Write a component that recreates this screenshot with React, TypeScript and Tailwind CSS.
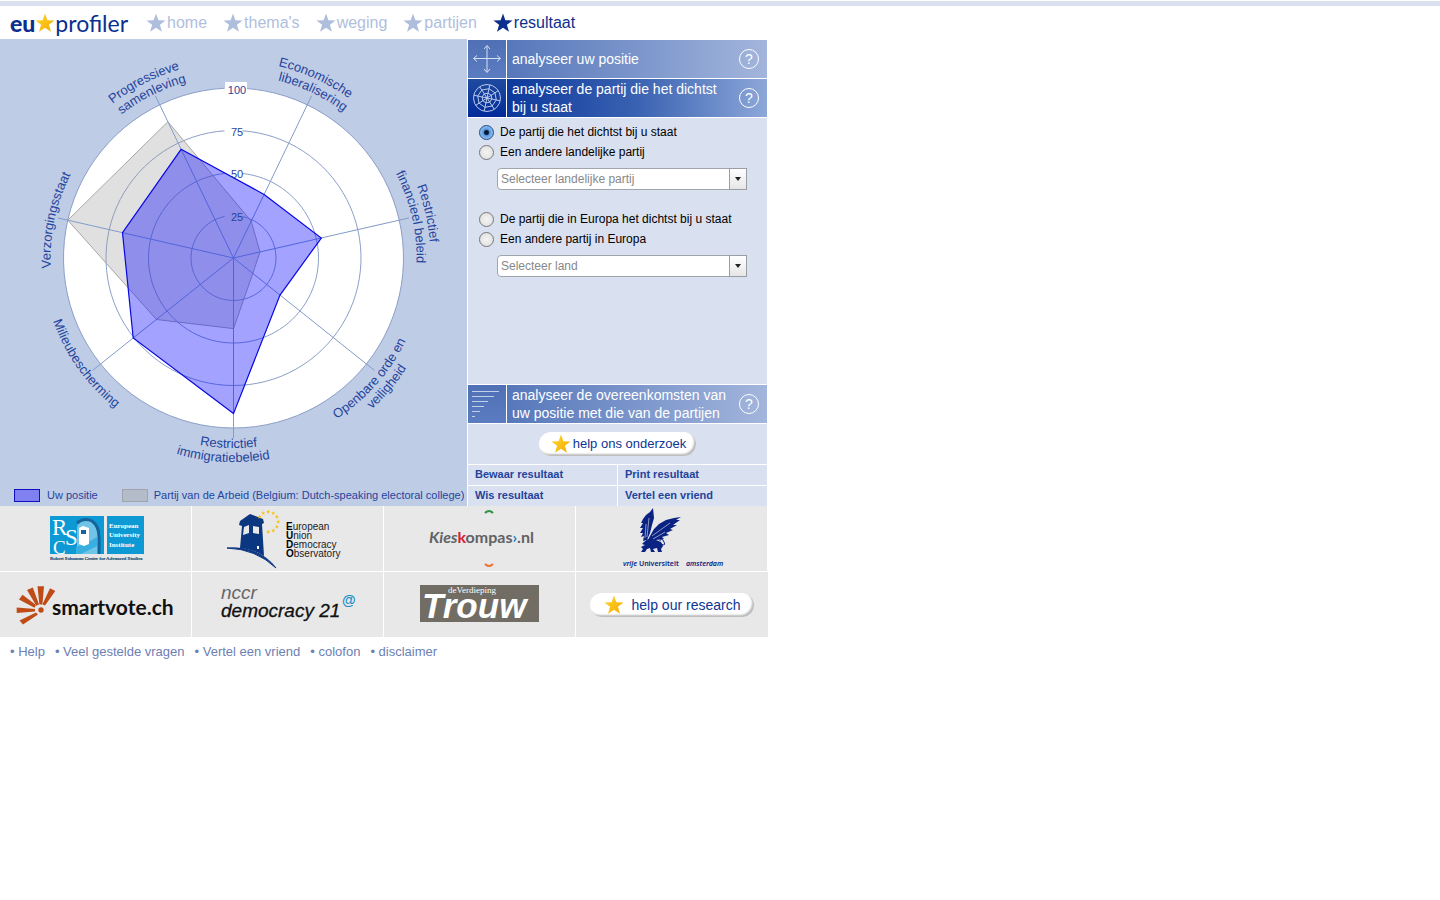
import { useState } from 'react';
import type { ReactNode } from 'react';

const STAR = 'M10 0.5 L12.4 7.2 L19.6 7.4 L13.9 11.8 L16 18.8 L10 14.7 L4 18.8 L6.1 11.8 L0.4 7.4 L7.6 7.2 Z';

const Star = ({ className }: { className: string }) => (
  <svg viewBox="0 0 20 20" className={className} aria-hidden="true">
    <path d={STAR} fill="currentColor" />
  </svg>
);

const GoldStar = ({ className }: { className: string }) => (
  <svg viewBox="0 0 20 20" className={className} aria-hidden="true">
    <defs>
      <linearGradient id="gold" x1="0" y1="0" x2="1" y2="1">
        <stop offset="0" stopColor="#ffd92e" />
        <stop offset="1" stopColor="#f5a800" />
      </linearGradient>
    </defs>
    <path d={STAR} fill="url(#gold)" />
  </svg>
);

const navItems = ['home', "thema's", 'weging', 'partijen', 'resultaat'];
const footerLinks = ['Help', 'Veel gestelde vragen', 'Vertel een vriend', 'colofon', 'disclaimer'];
const actions = ['Bewaar resultaat', 'Print resultaat', 'Wis resultaat', 'Vertel een vriend'];

// Radar geometry
const CX = 233.5;
const CY = 219;
const R = 170;
const axisAngles = [0, 1, 2, 3, 4, 5, 6].map((i) => ((i + 0.5) * 360) / 7);

const at = (deg: number, r: number): [number, number] => {
  const a = (deg * Math.PI) / 180;
  return [CX + r * Math.sin(a), CY - r * Math.cos(a)];
};

const polygon = (values: number[]) =>
  values.map((v, i) => at(axisAngles[i], (v * R) / 100).map((n) => n.toFixed(1)).join(',')).join(' ');

const arc = (from: number, to: number, r: number) => {
  const [x1, y1] = at(from, r);
  const [x2, y2] = at(to, r);
  const large = Math.abs(to - from) > 180 ? 1 : 0;
  return `M${x1} ${y1} A${r} ${r} 0 ${large} ${to > from ? 1 : 0} ${x2} ${y2}`;
};

const yourValues = [41.5, 53, 35, 91.5, 75.5, 67, 71];
const partyValues = [24, 16, 14.5, 41.5, 58, 100, 89];

const axisLabels = [
  { text: 'Economische', angle: 24.5, r: 197 },
  { text: 'liberalisering', angle: 25.5, r: 183 },
  { text: 'Restrictief', angle: 77, r: 197 },
  { text: 'financieel beleid', angle: 77, r: 183 },
  { text: 'Openbare orde en', angle: 131.5, r: 191, flip: true },
  { text: 'veiligheid', angle: 130, r: 205, flip: true },
  { text: 'Restrictief', angle: 181.5, r: 190, flip: true },
  { text: 'immigratiebeleid', angle: 183, r: 204, flip: true },
  { text: 'Milieubescherming', angle: 234.5, r: 191, flip: true },
  { text: 'Verzorgingsstaat', angle: 282, r: 183 },
  { text: 'samenleving', angle: 333.5, r: 182 },
  { text: 'Progressieve', angle: 333, r: 196 },
];

const RadarChart = () => (
  <svg viewBox="0 0 467 447" className="block w-full" role="img" aria-label="Radar" fontFamily='"Liberation Sans", Arial, sans-serif' fill="#1f449c">
    <circle cx={CX} cy={CY} r={R} fill="#fff" />
    {[25, 50, 75, 100].map((tick) => {
      const r = (tick * R) / 100;
      const gap = (Math.asin(9 / r) * 180) / Math.PI;
      return <path key={tick} d={arc(gap, 360 - gap, r)} fill="none" stroke="#8c9fc9" />;
    })}
    <polygon points={polygon(partyValues)} fill="#999" fillOpacity="0.3" stroke="#a8a8a8" />
    {axisAngles.map((angle) => {
      const [x, y] = at(angle, 180);
      return <line key={angle} x1={CX} y1={CY} x2={x} y2={y} stroke="#839bc9" />;
    })}
    <rect x="225" y="43" width="22" height="16" fill="#fff" />
    <polygon points={polygon(yourValues)} fill="#0000ff" fillOpacity="0.36" stroke="#0808e0" strokeWidth="1.2" />
    <g fontSize="11" textAnchor="middle">
      <text x="237" y="55">100</text>
      <text x="237" y="97">75</text>
      <text x="237" y="139">50</text>
      <text x="237" y="182">25</text>
    </g>
    {axisLabels.map((label, i) => (
      <g key={i}>
        <path
          id={`axis-label-${i}`}
          fill="none"
          d={label.flip ? arc(label.angle + 40, label.angle - 40, label.r) : arc(label.angle - 40, label.angle + 40, label.r)}
        />
        <text fontSize="13" textAnchor="middle">
          <textPath href={`#axis-label-${i}`} startOffset="50%">{label.text}</textPath>
        </text>
      </g>
    ))}
  </svg>
);

const CrossIcon = () => (
  <svg viewBox="0 0 38 38" className="size-full" fill="none" stroke="#d5dff2" aria-hidden="true">
    <path d="M19 6V32M6 18.5H32M16 9L19 5.5L22 9M16 29L19 32.5L22 29M9 15.5L5.5 18.5L9 21.5M29 15.5L32.5 18.5L29 21.5" />
  </svg>
);

const WebIcon = () => {
  const spokes = [0, 45, 90, 135, 180, 225, 270, 315].map((d) => {
    const a = ((d + 12) * Math.PI) / 180;
    return [Math.sin(a), -Math.cos(a)];
  });
  return (
    <svg viewBox="0 0 38 38" className="size-full" fill="none" stroke="#b9c9ea" aria-hidden="true">
      <circle cx="19" cy="19" r="13.5" />
      {[5, 9.5].map((r) => (
        <polygon key={r} points={spokes.map(([x, y]) => `${19 + x * r},${19 + y * r}`).join(' ')} />
      ))}
      {spokes.map(([x, y], i) => (
        <line key={i} x1="19" y1="19" x2={19 + x * 13.5} y2={19 + y * 13.5} />
      ))}
    </svg>
  );
};

const BarsIcon = () => (
  <svg viewBox="0 0 38 38" className="size-full" fill="none" stroke="#c3d0ec" aria-hidden="true">
    <path d="M4 6.5H31M4 11.5H26M4 16.5H20M4 21.5H16M4 26.5H12M4 31.5H7" />
  </svg>
);

const SectionBar = ({ icon, active, children }: { icon: ReactNode; active?: boolean; children: ReactNode }) => (
  <div className="flex min-h-[38px] gap-px bg-white">
    <div className={`w-[38px] shrink-0 ${active ? 'bg-linear-to-b from-[#1f4a9f] to-[#03299a]' : 'bg-linear-to-b from-[#4f70b4] to-[#5b7cc0]'}`}>{icon}</div>
    <div className={`flex flex-1 items-center bg-linear-to-r pr-2 pl-[5px] ${active ? 'from-[#0c389c] via-[#3a62b2] to-[#8da7d8]' : 'from-[#5677ba] to-[#a3b5dc]'}`}>
      <button type="button" className="flex-1 pr-2 text-left text-sm leading-[18px] text-white">{children}</button>
      <button type="button" className="flex size-5 shrink-0 items-center justify-center rounded-full border border-white text-sm leading-none text-white">?</button>
    </div>
  </div>
);

const Choice = ({ value, selected, onSelect, children }: { value: string; selected: string; onSelect: (v: string) => void; children: ReactNode }) => (
  <label className="flex h-5 items-center gap-1.5 text-xs text-black">
    <input
      type="radio"
      name="party"
      checked={selected === value}
      onChange={() => onSelect(value)}
      className="size-[15px] appearance-none rounded-full border border-[#777] bg-radial from-[#f4f4f4] to-[#dcdcdc] checked:border-[#234a80] checked:bg-radial checked:from-[#06182f] checked:from-20% checked:via-[#5b9be4] checked:via-35% checked:to-[#b5dcfa]"
    />
    {children}
  </label>
);

const Dropdown = ({ label }: { label: string }) => (
  <div className="relative mt-1.5 mr-5 ml-[18px]">
    <select aria-label={label} className="block h-[22px] w-full appearance-none rounded-l-sm border border-[#a0a5ad] bg-white pr-5 pl-[3px] text-xs text-[#888]">
      <option>{label}</option>
    </select>
    <span className="pointer-events-none absolute inset-y-0 right-0 flex w-[18px] items-center justify-center border border-[#9a9da3] bg-linear-to-b from-white to-[#e6e6e6]">
      <svg viewBox="0 0 6 4" className="h-1 w-1.5" aria-hidden="true"><path d="M0 0H6L3 4Z" fill="#222" /></svg>
    </span>
  </div>
);

const HelpButton = ({ className, children }: { className: string; children: ReactNode }) => (
  <button type="button" className={`flex h-6 items-center rounded-full bg-white text-[#0d3594] shadow-[inset_-2px_-2px_2px_#bbb] ${className}`}>
    <GoldStar className="h-5 w-5" />
    {children}
  </button>
);

const Logo = ({ label, children }: { label: string; children: ReactNode }) => (
  <a href="#" aria-label={label} className="flex h-[66px] items-center justify-center border-r border-b border-white bg-[#e8e8e8]">
    <svg viewBox="0 0 191 65" className="h-full w-full">{children}</svg>
  </a>
);

const SchumanLogo = () => (
  <Logo label="Robert Schuman Centre">
    <rect x="50" y="10" width="54" height="38" fill="#0d99d4" />
    <rect x="107" y="10" width="37" height="38" fill="#0d99d4" />
    <path d="M77 48V22Q78 13 87 14Q99 16 99 30V48Z" fill="#6fc4e8" />
    <path d="M77 17Q84 11 92 15Q99 20 99 31V48" fill="none" stroke="#17639c" strokeWidth="3" />
    <path d="M76 41L87 37L97 31V40L81 48H76Z" fill="#39afe0" />
    <path d="M79 22L83 20L89 22V38L84 40L79 38Z" fill="#fff" />
    <path d="M81 24H86V28H81Z" fill="#17639c" />
    <g fill="#fff" fontFamily='"Liberation Serif", serif'>
      <text x="52" y="29" fontSize="23">R</text>
      <text x="65" y="39" fontSize="23">S</text>
      <text x="53" y="48" fontSize="19">C</text>
      <g fontSize="7" fontWeight="bold">
        <text x="109" y="22">European</text>
        <text x="109" y="31">University</text>
        <text x="109" y="41">Institute</text>
      </g>
    </g>
    <text x="50" y="54" fontSize="5" fill="#0c3f6b" stroke="#0c3f6b" strokeWidth="0.2" fontFamily='"Liberation Serif", serif'>Robert Schuman Centre for Advanced Studies</text>
  </Logo>
);

const EudoLogo = () => (
  <Logo label="European Union Democracy Observatory">
    <path d="M48 15L58 8L71 13L72 17L70 18L72 50Q61 43 48 42L50 20L47 19Z" fill="#0b3680" />
    <path d="M52 21L57 19V27L51 29ZM61 20L67 21V28L61 27Z" fill="#e8e8e8" />
    <path d="M65 40H67V43H65Z" fill="#fff" />
    <path d="M35 42Q67 40 84 62Q64 43 35 42Z" fill="#0b3680" stroke="#0b3680" />
    {[-60, -30, 0, 30, 60, 90, 120, 150, 180].map((d) => {
      const a = (d * Math.PI) / 180;
      return <path key={d} d={STAR} fill="#f5c21b" transform={`translate(${74 + 10 * Math.sin(a)} ${13.5 - 10 * Math.cos(a)}) scale(0.22)`} />;
    })}
    <g fontFamily='"Liberation Sans", Arial, sans-serif' fontSize="10" fill="#222">
      {['European', 'Union', 'Democracy', 'Observatory'].map((word, i) => (
        <text key={word} x="94" y={24 + i * 9}>
          <tspan fontWeight="bold" fill="#000">{word[0]}</tspan>{word.slice(1)}
        </text>
      ))}
    </g>
  </Logo>
);

const KieskompasLogo = () => (
  <Logo label="Kieskompas.nl">
    <path d="M101 7Q105 3 109 7" fill="none" stroke="#2c9347" strokeWidth="2" />
    <path d="M101 58Q105 62 109 58" fill="none" stroke="#ef6f2e" strokeWidth="2" />
    <text x="45" y="37" fontSize="16" fontWeight="bold" fill="#606264" fontFamily="Lato, sans-serif">
      <tspan fontStyle="italic">Kies</tspan><tspan fill="#d8202f">k</tspan>ompas<tspan fill="#1e80c8">›</tspan>.nl
    </text>
  </Logo>
);

const VuLogo = () => (
  <Logo label="vrije Universiteit amsterdam">
    <g fill="#0a2382">
      <path d="M77 2L74 6L70 9L67 13L65 17L67 17L64 22L67 22L64 27L67 27L65 31L68 30L67 35L71 34L74 27L76 19L78 12Z" />
      <path d="M105 11L98 12L90 14L83 18L78 23L74 30L71 36L80 34L88 33L86 31L93 29L90 27L97 24L94 23L101 19L97 19L104 14L100 14Z" />
      <path d="M68 36L72 33L80 34L85 36L87 40L85 43L86 46H82L81 42L77 43L79 46H75L74 42L71 43L69 46H65L67 43L65 41L69 39L66 38Z" />
    </g>
    <path d="M69 32L70 18M71 31L73 12M76 30L94 17M77 33L89 26" stroke="#e8e8e8" fill="none" strokeWidth="0.6" />
    <path d="M85 38Q91 41 87 34Q84 32 84 35" stroke="#0a2382" fill="none" strokeWidth="1" />
    <g fontFamily='"Noto Sans", sans-serif' fontSize="7" fontWeight="600" fill="#0a2382">
      <text x="47" y="60"><tspan fontStyle="italic">vrije</tspan> Universiteit</text>
      <text x="110" y="60" fontStyle="italic">amsterdam</text>
    </g>
  </Logo>
);

const SmartvoteLogo = () => (
  <Logo label="smartvote.ch">
    <g fill="#bf4b16">
      <circle cx="41" cy="38" r="2.7" />
      <path d="M37.5 14.3H44L42.4 32.5H39.4Z" />
      <path d="M27 18L32.8 15.5L39 32.5L36.3 33.8Z" />
      <path d="M19 27.5L22.5 22.7L36 33L34.5 35.8Z" />
      <path d="M16.7 35.5V41L35 39.5V37Z" />
      <path d="M19.5 48.5L23 52.5L38 42.5L36 40.5Z" />
      <path d="M50 16.3L55.3 19L45 33.5L42.5 32.3Z" />
    </g>
    <text x="52" y="43" fontSize="21" fontWeight="bold" fill="#111" fontFamily="Lato, sans-serif">smartvote.ch</text>
  </Logo>
);

const NccrLogo = () => (
  <Logo label="nccr democracy 21">
    <g fontFamily='"Liberation Sans", Arial, sans-serif'>
      <text x="29" y="27" fontSize="19" fontStyle="italic" fill="#666">nccr</text>
      <text x="29" y="45" fontSize="19" fontStyle="italic" fill="#111" stroke="#111" strokeWidth="0.3">democracy 21</text>
      <text x="150" y="33" fontSize="14" fontWeight="bold" fill="#1b8fc6">@</text>
    </g>
  </Logo>
);

const TrouwLogo = () => (
  <Logo label="Trouw">
    <rect x="36" y="13" width="119" height="37" fill="#716d64" />
    <g fill="#fff">
      <text x="64" y="21" fontSize="9" fontFamily='"Liberation Serif", serif'>deVerdieping</text>
      <text x="38" y="46" fontSize="35" fontWeight="bold" fontStyle="italic" fontFamily='"Liberation Sans", Arial, sans-serif'>Trouw</text>
    </g>
  </Logo>
);

const App = () => {
  const [choice, setChoice] = useState('closest');

  return (
    <div className="pt-px font-['Liberation_Sans',Arial,sans-serif]">
      <div className="h-[5px] bg-[#dae0ee]" />
      <div className="max-w-3xl">
        <header className="flex h-[33px] items-center pl-2.5">
          <a href="#" className="flex items-center font-['Lato',sans-serif] text-[23px] leading-7 text-[#0b2f8e]">
            <span className="font-black">eu</span>
            <GoldStar className="h-5 w-5" />
            <span>profiler</span>
          </a>
          <nav className="ml-[18px] flex items-center gap-4">
            {navItems.map((item) => (
              <a key={item} href="#" className={`flex items-center gap-px ${item === 'resultaat' ? 'text-[#0b2f8e]' : 'text-[#b0bedd]'}`}>
                <Star className="h-5 w-5" />
                <span>{item}</span>
              </a>
            ))}
          </nav>
        </header>

        <main className="grid grid-cols-[467fr_301fr]">
          <section className="flex flex-col bg-[#bfcce6]">
            <RadarChart />
            <div className="flex items-center pl-3.5 text-[11px] leading-[18px] whitespace-nowrap text-[#1f449c]">
              <span className="mr-[7px] h-[13px] w-[26px] border border-[#1010c0] bg-[#8080f0]" />
              Uw positie
              <span className="mr-1.5 ml-6 h-[13px] w-[26px] border border-[#a0a5ad] bg-[#b4bcc9]" />
              Partij van de Arbeid (Belgium: Dutch-speaking electoral college)
            </div>
          </section>

          <section className="flex flex-col gap-px bg-white px-px pt-px">
            <SectionBar icon={<CrossIcon />}>analyseer uw positie</SectionBar>
            <SectionBar icon={<WebIcon />} active>analyseer de partij die het dichtst bij u staat</SectionBar>
            <div className="min-h-[266px] flex-1 bg-[#d9e0f0] pt-1 pl-[11px]">
              <Choice value="closest" selected={choice} onSelect={setChoice}>De partij die het dichtst bij u staat</Choice>
              <Choice value="other" selected={choice} onSelect={setChoice}>Een andere landelijke partij</Choice>
              <Dropdown label="Selecteer landelijke partij" />
              <div className="mt-[19px]">
                <Choice value="closest-eu" selected={choice} onSelect={setChoice}>De partij die in Europa het dichtst bij u staat</Choice>
                <Choice value="other-eu" selected={choice} onSelect={setChoice}>Een andere partij in Europa</Choice>
                <Dropdown label="Selecteer land" />
              </div>
            </div>
            <SectionBar icon={<BarsIcon />}>analyseer de overeenkomsten van uw positie met die van de partijen</SectionBar>
            <div className="flex h-10 items-center justify-center bg-[#d9e0f0]">
              <HelpButton className="gap-0.5 pr-2.5 pl-3 text-[13px]">help ons onderzoek</HelpButton>
            </div>
            <div className="grid grid-cols-2 gap-px">
              {actions.map((action) => (
                <a key={action} href="#" className="h-5 bg-[#d9e0f0] pl-[7px] text-[11px] leading-[18px] font-bold text-[#1f449c]">{action}</a>
              ))}
            </div>
          </section>
        </main>

        <section className="grid grid-cols-4">
          <SchumanLogo />
          <EudoLogo />
          <KieskompasLogo />
          <VuLogo />
          <SmartvoteLogo />
          <NccrLogo />
          <TrouwLogo />
          <div className="flex h-[66px] items-center justify-center border-b border-white bg-[#e8e8e8]">
            <HelpButton className="gap-2 px-3.5 text-sm">help our research</HelpButton>
          </div>
        </section>

        <footer className="flex h-7 items-center gap-2.5 pl-2.5 text-[13px] text-[#6c80b4]">
          {footerLinks.map((link) => (
            <a key={link} href="#">• {link}</a>
          ))}
        </footer>
      </div>
    </div>
  );
};

export default App;
